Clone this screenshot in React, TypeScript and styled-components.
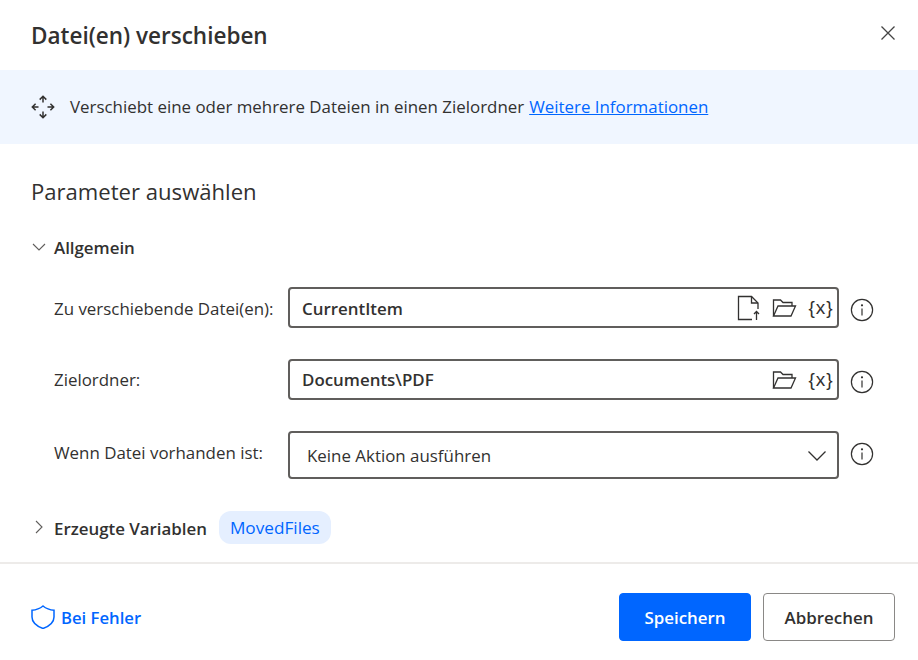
import React from 'react'
import styled, { createGlobalStyle } from 'styled-components'

const GlobalStyle = createGlobalStyle`
  html, body {
    margin: 0;
    padding: 0;
    background: #fff;
  }
  body {
    font-family: "Open Sans", "Noto Sans", sans-serif;
    color: #323130;
  }
`

const MoveIcon = () => (
  <svg width="24" height="24" viewBox="0 0 24 24" fill="none" stroke="#323130" strokeWidth="1.5">
    <path d="M12 1.500v6M8.700 4.600 12 1.300l3.300 3.300" />
    <path d="M12 22.500v-6M8.700 19.400l3.300 3.300 3.300-3.300" />
    <path d="M1.500 12h6M4.600 8.700 1.300 12l3.300 3.300" />
    <path d="M22.500 12h-6M19.400 8.700l3.300 3.300-3.300 3.300" />
  </svg>
)

const CloseIcon = () => (
  <svg width="16" height="16" viewBox="0 0 16 16" fill="none" stroke="#444" strokeWidth="1.3">
    <path d="M1.500 1.500l13 13M14.500 1.500l-13 13" />
  </svg>
)

const Chevron = ({ open }: { open: boolean }) => (
  <svg width="16" height="16" viewBox="0 0 16 16" fill="none" stroke="#605e5c" strokeWidth="1.1">
    {open ? <path d="M2 5l6 6 6-6" /> : <path d="M5 2l6 6-6 6" />}
  </svg>
)

const FileUpIcon = () => (
  <svg width="26" height="26" viewBox="0 0 26 26" fill="none" stroke="#323130" strokeWidth="1.300">
    <path d="M16 24.500H2.500V1.500h13l6.500 6.500V14" />
    <path d="M15.500 1.500V8H22" />
    <path d="M20.500 25v-8.500M18 19l2.500-2.500L23 19" />
  </svg>
)

const FolderIcon = () => (
  <svg width="25" height="20" viewBox="0 0 25 20" fill="none" stroke="#323130" strokeWidth="1.300">
    <path d="M1.500 18V2h7l2.500 2.500h9V8" />
    <path d="M1.500 18 6 8h17.500L19 18z" />
  </svg>
)

const InfoIcon = () => (
  <svg width="24" height="24" viewBox="0 0 24 24" fill="none" stroke="#323130" strokeWidth="1.200">
    <circle cx="12" cy="12" r="10.600" />
    <path d="M12 10.500v7" />
    <circle cx="12" cy="7.300" r="0.500" fill="#323130" />
  </svg>
)

const ShieldIcon = () => (
  <svg width="24" height="24" viewBox="0 0 24 24" fill="none" stroke="#0066ff" strokeWidth="1.500">
    <path d="M12 1c3 2.500 7 4 11 4.300V12c0 5-3.800 8.800-11 11.500C4.800 20.800 1 17 1 12V5.300C5 5 9 3.500 12 1z" />
  </svg>
)

const Dialog = styled.div`
  width: 918px;
  height: 660px;
  display: flex;
  flex-direction: column;
  overflow: hidden;
  background: #fff;
`

const Header = styled.div`
  height: 70px;
  padding: 0 21px 0 31px;
  display: flex;
  align-items: center;
  justify-content: space-between;
  box-sizing: border-box;
`

const Title = styled.div`
  font-size: 22.500px;
  font-weight: 600;
  color: #323130;
  margin-top: 1px;
`

const CloseButton = styled.div`
  width: 18px;
  height: 18px;
  display: flex;
  align-items: center;
  justify-content: center;
  margin-bottom: 4px;
`

const Banner = styled.div`
  height: 74px;
  padding: 0 31px;
  display: flex;
  align-items: center;
  gap: 15px;
  background: #f0f6ff;
  font-size: 16.900px;
  box-sizing: border-box;
`

const BannerText = styled.span`
  margin-bottom: 2px;
`

const BannerLink = styled.a`
  color: #0066ff;
  text-decoration: underline;
  margin-left: 5px;
`

const Content = styled.div`
  flex: 1;
  padding: 31px 31px 0;
  display: flex;
  flex-direction: column;
`

const SectionTitle = styled.div`
  font-size: 22.100px;
  line-height: 32px;
  color: #323130;
`

const GroupHeader = styled.div<{ $top: number }>`
  margin-top: ${p => p.$top}px;
  height: 32px;
  display: flex;
  align-items: center;
  gap: 7px;
  font-size: 16.900px;
  font-weight: 600;
`

const GroupLabel = styled.span<{ $low?: boolean }>`
  margin-top: ${p => (p.$low ? 2 : 0)}px;
  letter-spacing: -0.02px;
`

const Rows = styled.div`
  margin-top: 24px;
  margin-left: 23px;
  display: flex;
  flex-direction: column;
  gap: 31px;
`

const Row = styled.div`
  display: flex;
  align-items: center;
`

const Label = styled.div<{ $down?: number; $up?: number }>`
  width: 234px;
  font-size: 16.900px;
  flex-shrink: 0;
  margin-top: ${p => p.$down ?? 0}px;
  margin-bottom: ${p => p.$up ?? 0}px;
`

const Field = styled.div<{ $tall?: boolean }>`
  width: 551px;
  height: ${p => (p.$tall ? 48 : 41)}px;
  box-sizing: border-box;
  border: 2px solid #605e5c;
  border-radius: 4px;
  padding: 0 3px 0 ${p => (p.$tall ? 17 : 12)}px;
  display: flex;
  align-items: center;
  justify-content: space-between;
  font-size: 16.900px;
`

const FieldValue = styled.span<{ $bold?: boolean; $down?: number }>`
  font-weight: ${p => (p.$bold ? 600 : 400)};
  margin-top: ${p => p.$down ?? 0}px;
`

const FieldIcons = styled.div`
  display: flex;
  align-items: center;
  gap: 10px;
`

const VarToken = styled.span`
  font-family: "Liberation Sans", sans-serif;
  font-size: 19px;
  letter-spacing: 1px;
  width: 26px;
  margin-left: 1px;
  text-align: center;
`

const SelectChevron = styled.div`
  display: flex;
  margin-right: 7px;
  margin-top: 2px;
`

const InfoButton = styled.div<{ $up?: boolean }>`
  display: flex;
  margin-left: 11px;
  margin-top: ${p => (p.$up ? 0 : 4)}px;
  margin-bottom: ${p => (p.$up ? 3 : 0)}px;
`

const Token = styled.span`
  height: 33px;
  margin-left: 5px;
  padding: 0 11px;
  display: flex;
  align-items: center;
  border-radius: 12px;
  background: #e5efff;
  color: #0066ff;
  font-size: 17.200px;
  font-weight: 400;
`

const Footer = styled.div`
  height: 98px;
  border-top: 2px solid #edebe9;
  padding: 29px 23px 0 31px;
  box-sizing: border-box;
  display: flex;
  align-items: flex-start;
  justify-content: space-between;
`

const ErrorLink = styled.div`
  height: 48px;
  display: flex;
  align-items: center;
  gap: 6px;
  color: #0066ff;
  font-size: 16.700px;
  font-weight: 600;
`

const Buttons = styled.div`
  display: flex;
  gap: 12px;
`

const Button = styled.div<{ $primary?: boolean }>`
  width: 132px;
  height: 48px;
  box-sizing: border-box;
  border-radius: 4px;
  border: 1px solid ${p => (p.$primary ? '#0066ff' : '#8a8886')};
  background: ${p => (p.$primary ? '#0066ff' : '#fff')};
  color: ${p => (p.$primary ? '#fff' : '#323130')};
  display: flex;
  align-items: center;
  justify-content: center;
  font-size: 16.900px;
  font-weight: 600;
`

export default function App() {
  return (
    <Dialog>
      <GlobalStyle />
      <Header>
        <Title>Datei(en) verschieben</Title>
        <CloseButton>
          <CloseIcon />
        </CloseButton>
      </Header>
      <Banner>
        <MoveIcon />
        <BannerText>
          Verschiebt eine oder mehrere Dateien in einen Zielordner
          <BannerLink>Weitere Informationen</BannerLink>
        </BannerText>
      </Banner>
      <Content>
        <SectionTitle>Parameter auswählen</SectionTitle>
        <GroupHeader $top={24}>
          <Chevron open />
          <GroupLabel>Allgemein</GroupLabel>
        </GroupHeader>
        <Rows>
          <Row>
            <Label $down={2}>Zu verschiebende Datei(en):</Label>
            <Field>
              <FieldValue $bold $down={2}>CurrentItem</FieldValue>
              <FieldIcons>
                <FileUpIcon />
                <FolderIcon />
                <VarToken>{'{x}'}</VarToken>
              </FieldIcons>
            </Field>
            <InfoButton>
              <InfoIcon />
            </InfoButton>
          </Row>
          <Row>
            <Label>Zielordner:</Label>
            <Field>
              <FieldValue $bold>Documents\PDF</FieldValue>
              <FieldIcons>
                <FolderIcon />
                <VarToken>{'{x}'}</VarToken>
              </FieldIcons>
            </Field>
            <InfoButton>
              <InfoIcon />
            </InfoButton>
          </Row>
          <Row>
            <Label $up={5}>Wenn Datei vorhanden ist:</Label>
            <Field $tall>
              <FieldValue>Keine Aktion ausführen</FieldValue>
              <SelectChevron>
                <svg width="20" height="12" viewBox="0 0 20 12" fill="none" stroke="#323130" strokeWidth="1.300">
                  <path d="M1.500 1.500 10 10l8.500-8.500" />
                </svg>
              </SelectChevron>
            </Field>
            <InfoButton $up>
              <InfoIcon />
            </InfoButton>
          </Row>
        </Rows>
        <GroupHeader $top={32}>
          <Chevron open={false} />
          <GroupLabel $low>Erzeugte Variablen</GroupLabel>
          <Token>MovedFiles</Token>
        </GroupHeader>
      </Content>
      <Footer>
        <ErrorLink>
          <ShieldIcon />
          Bei Fehler
        </ErrorLink>
        <Buttons>
          <Button $primary>Speichern</Button>
          <Button>Abbrechen</Button>
        </Buttons>
      </Footer>
    </Dialog>
  )
}
